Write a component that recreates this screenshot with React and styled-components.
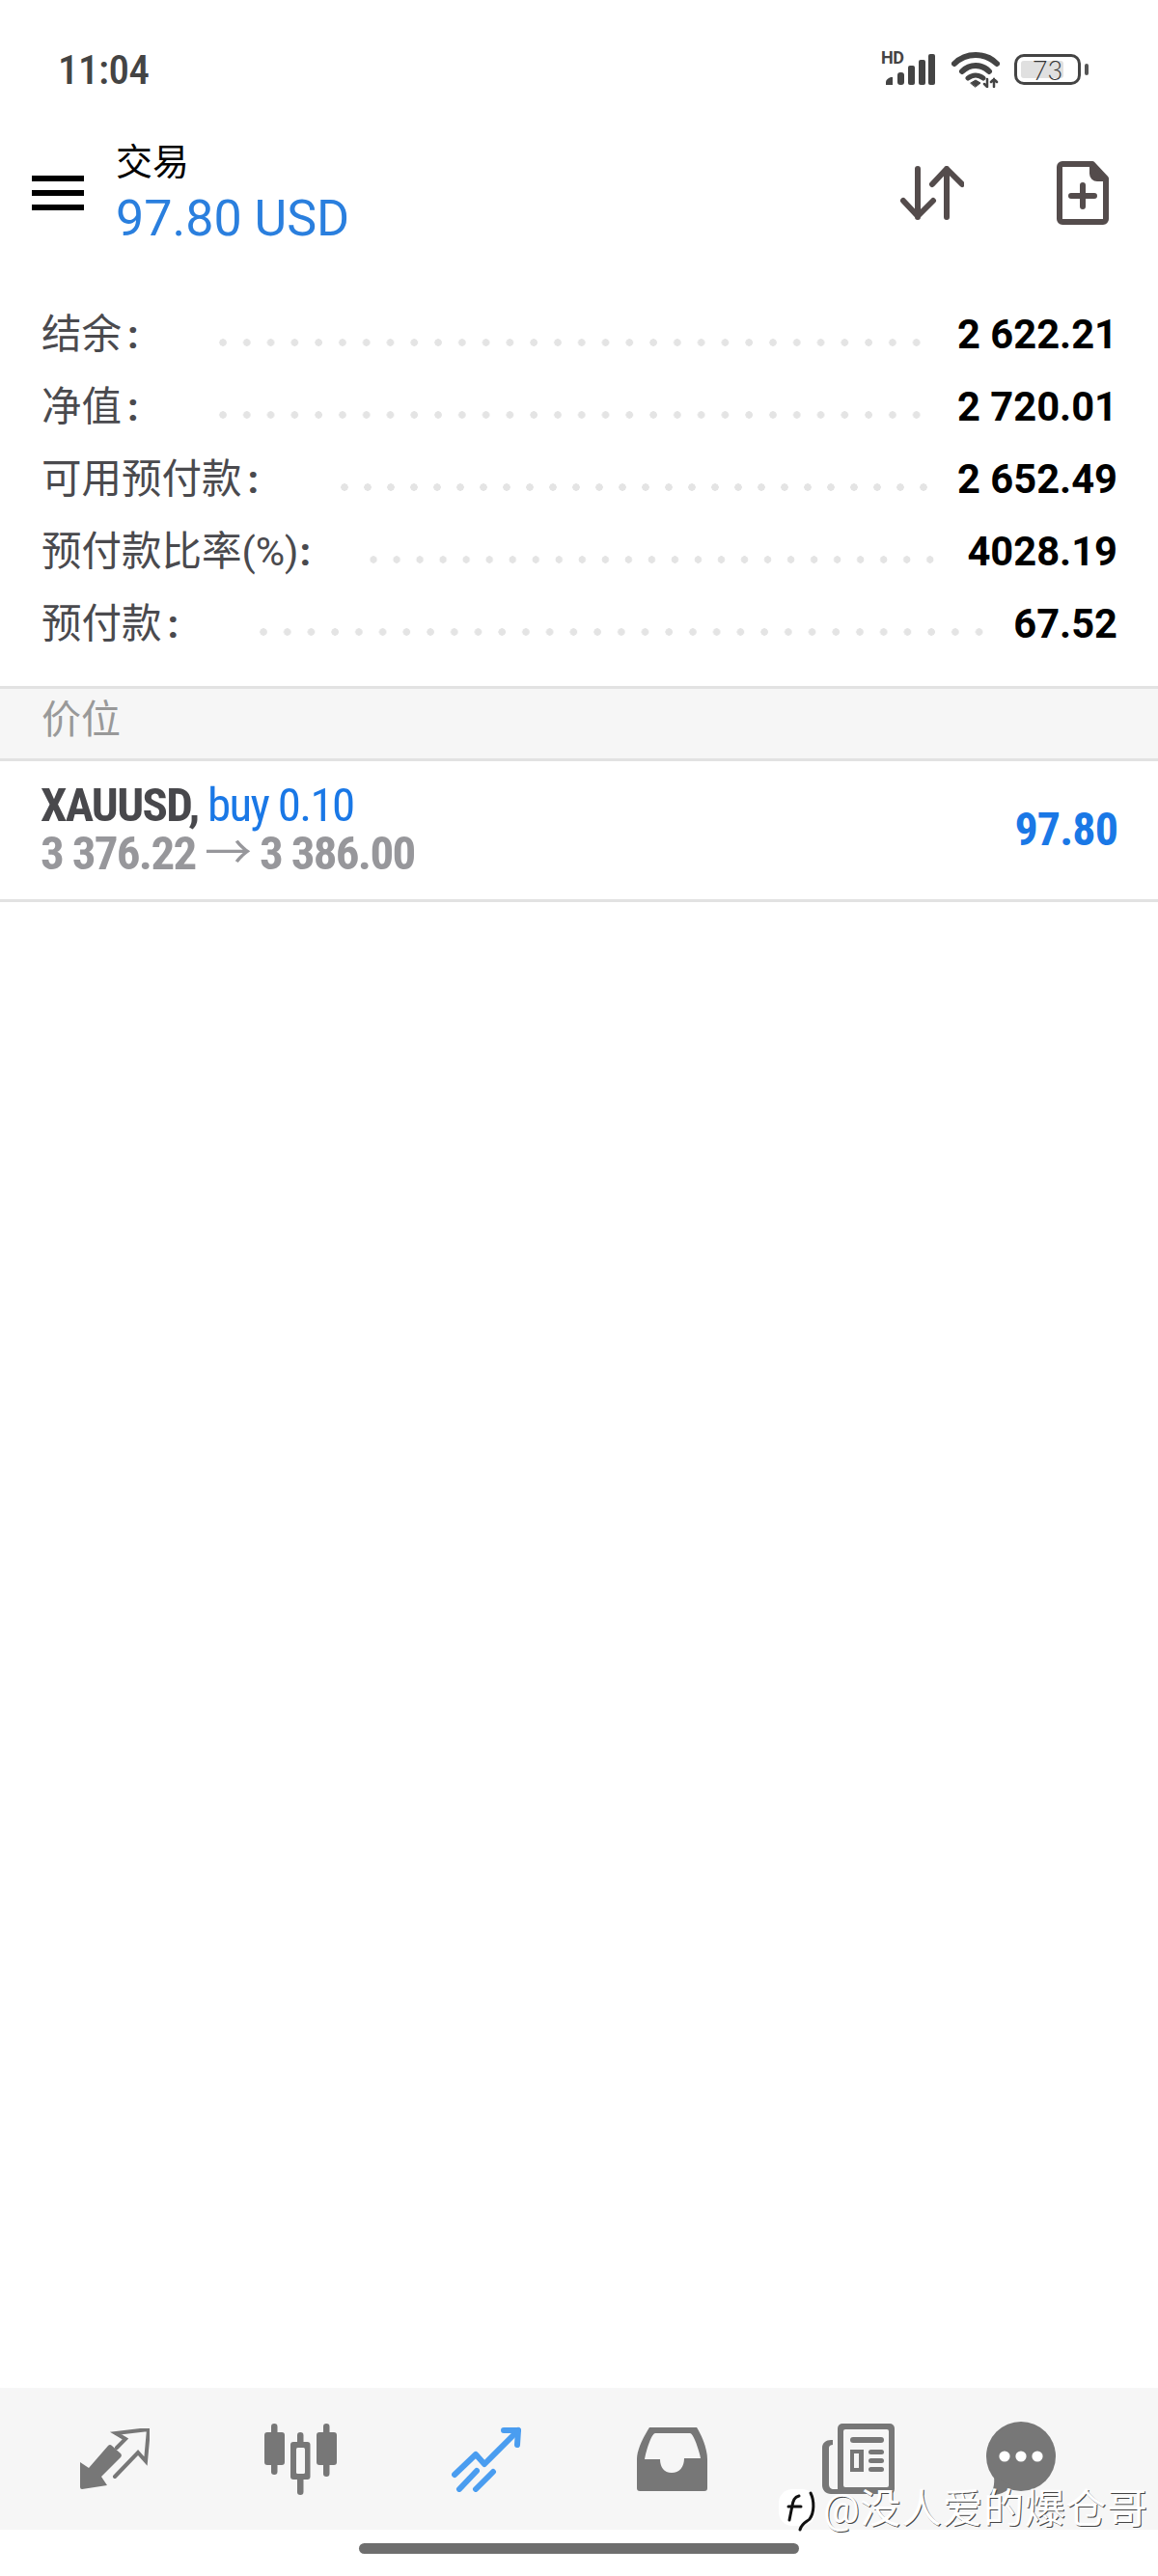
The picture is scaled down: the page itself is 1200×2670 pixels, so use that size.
import React from 'react';
import styled, { createGlobalStyle } from 'styled-components';

const GlobalStyle = createGlobalStyle`
  html, body {
    margin: 0;
    padding: 0;
    background: #fff;
  }
  * {
    box-sizing: border-box;
  }
`;

const Page = styled.div`
  position: relative;
  display: flex;
  flex-direction: column;
  width: 1200px;
  height: 2670px;
  overflow: hidden;
  background: #fff;
  font-family: Roboto, "Noto Sans CJK SC", sans-serif;
`;

const StatusBar = styled.div`
  display: flex;
  align-items: center;
  justify-content: space-between;
  height: 140px;
  padding: 4px 80px 0 60px;
`;

const Clock = styled.span`
  font-size: 43px;
  font-weight: 500;
  font-stretch: 80%;
  letter-spacing: -0.5px;
  color: #444;
`;

const StatusIcons = styled.div`
  display: flex;
  align-items: center;
  gap: 15px;
`;

const Signal = styled.div`
  position: relative;
  width: 56px;
  height: 36px;
`;

const HdBadge = styled.span`
  position: absolute;
  top: -3px;
  left: -2px;
  font-size: 18px;
  line-height: 18px;
  font-weight: 700;
  letter-spacing: -0.5px;
  color: #444;
`;

const Battery = styled.div`
  position: relative;
  display: flex;
  align-items: center;
  justify-content: center;
  width: 69px;
  height: 32px;
  border: 3px solid #444;
  border-radius: 10px;
  font-family: Lato, sans-serif;
  font-size: 27px;
  font-weight: 300;
  color: #333;
  &::before {
    content: '';
    position: absolute;
    left: 4px;
    top: 4px;
    bottom: 4px;
    width: 44px;
    border-radius: 3px;
    background: #e0e0e0;
  }
  &::after {
    content: '';
    position: absolute;
    right: -11px;
    top: 7px;
    width: 4px;
    height: 12px;
    border-radius: 2px;
    background: #555;
  }
`;

const BatteryLevel = styled.span`
  position: relative;
  line-height: 1;
`;

const Header = styled.header`
  display: flex;
  align-items: center;
  height: 120px;
  padding: 0 51px 0 33px;
`;

const Menu = styled.div`
  display: flex;
  flex-direction: column;
  gap: 9px;
  width: 54px;
  margin-right: 33px;
`;

const MenuBar = styled.span`
  height: 6px;
  background: #000;
`;

const TitleBlock = styled.div`
  display: flex;
  flex-direction: column;
  flex: 1;
`;

const Title = styled.div`
  margin-top: -2px;
  font-size: 38px;
  line-height: 50px;
  color: #000;
`;

const Profit = styled.div`
  margin-top: 1px;
  margin-bottom: -5px;
  font-size: 52px;
  line-height: 66px;
  color: #2a7fde;
`;

const HeaderActions = styled.div`
  display: flex;
  align-items: center;
  gap: 96px;
`;

const Summary = styled.section`
  padding: 48px 42px 28px 43px;
`;

const SummaryRow = styled.div`
  display: flex;
  align-items: center;
  height: 75px;
`;

const Label = styled.span`
  padding-bottom: 6px;
  font-size: 41.5px;
  color: #4a4a4e;
  white-space: nowrap;
`;

const Colon = styled.span`
  margin-left: ${({ $tight }) => ($tight ? 1 : 6)}px;
  font-weight: 700;
`;

const Leader = styled.span`
  flex: 1;
  height: 8px;
  margin: 18px ${({ $end }) => $end}px 0 ${({ $gap }) => $gap}px;
  background-image: radial-gradient(circle at 12px 4px, #e4e4e4 3.5px, transparent 4px);
  background-size: 24px 8px;
  background-repeat: space no-repeat;
`;

const Value = styled.span`
  margin-top: 2px;
  font-size: 41.7px;
  font-weight: 700;
  color: #000;
  white-space: nowrap;
`;

const SectionTitle = styled.div`
  display: flex;
  align-items: center;
  height: 78px;
  padding: 0 0 17px 43px;
  border-top: 3px solid #e2e2e2;
  border-bottom: 3px solid #e2e2e2;
  background: #f6f6f6;
  font-size: 41px;
  color: #999;
`;

const PositionRow = styled.div`
  display: flex;
  align-items: center;
  justify-content: space-between;
  height: 146px;
  padding: 0 42px 2px 42px;
  border-bottom: 3px solid #e2e2e2;
  font-stretch: 75%;
`;

const PositionInfo = styled.div`
  display: flex;
  flex-direction: column;
`;

const PositionLine = styled.div`
  font-size: 49px;
  line-height: 50px;
  letter-spacing: -1.7px;
  white-space: nowrap;
`;

const Symbol = styled.span`
  font-weight: 700;
  color: #48484c;
`;

const Side = styled.span`
  color: #1a78e6;
`;

const Prices = styled.span`
  font-weight: 700;
  color: #97979b;
`;

const PriceArrow = styled.span`
  font-weight: 400;
`;

const PositionProfit = styled.span`
  font-size: 48px;
  font-weight: 700;
  letter-spacing: -0.9px;
  color: #1a78e6;
`;

const Spacer = styled.div`
  flex: 1;
`;

const NavBar = styled.nav`
  display: grid;
  grid-template-columns: repeat(5, 192.5px) 144px;
  align-items: center;
  height: 147px;
  padding-left: 23px;
  background: #f6f6f6;
`;

const NavItem = styled.div`
  display: flex;
  justify-content: center;
`;

const HomeArea = styled.div`
  display: flex;
  align-items: center;
  justify-content: center;
  height: 48px;
`;

const HomeIndicator = styled.div`
  width: 456px;
  height: 11px;
  margin-top: -9px;
  border-radius: 6px;
  background: #6e6e6e;
`;

const Watermark = styled.div`
  position: absolute;
  left: 807px;
  top: 2578px;
  display: flex;
  align-items: center;
  gap: 6px;
  font-size: 42px;
  line-height: 46px;
  letter-spacing: 0.6px;
  color: #fff;
  text-shadow: 1px 1px 0 #444;
  white-space: nowrap;
`;

const SortIcon = () => (
  <svg width="66" height="56" viewBox="0 0 66 56" fill="none" stroke="#544c4c" strokeWidth="6" strokeLinecap="round" strokeLinejoin="round">
    <path d="M18 3v50M3 36l15 16 16-16" />
    <path d="M48 3v50M33 19L48 3l16 16" />
  </svg>
);

const NewOrderIcon = () => (
  <svg width="54" height="66" viewBox="0 0 54 66" fill="none" stroke="#544c4c" strokeLinejoin="round">
    <path d="M6 3h31l14 15v42a3 3 0 0 1-3 3H6a3 3 0 0 1-3-3V6a3 3 0 0 1 3-3z" strokeWidth="6" />
    <path d="M35 3v10a7 7 0 0 0 7 7h9z" fill="#544c4c" strokeWidth="2" />
    <path d="M27 25v22M15 36h24" strokeWidth="6" strokeLinecap="round" />
  </svg>
);

const SignalBars = () => (
  <svg width="56" height="36" viewBox="0 0 56 36" fill="#444">
    <path d="M3 34v-3c0-2 2-4 5-5h2v8z" />
    <rect x="15" y="21" width="7" height="13" rx="3" />
    <rect x="26" y="14" width="7" height="20" rx="2" />
    <rect x="37" y="8" width="7" height="26" rx="2" />
    <rect x="47" y="2" width="7" height="32" rx="2" />
  </svg>
);

const WifiIcon = () => (
  <svg width="50" height="38" viewBox="0 0 50 38" fill="none" stroke="#444" strokeLinecap="round">
    <path d="M3 13C15 1 35 1 47 13" strokeWidth="6" />
    <path d="M11 21c8-8 20-8 28 0" strokeWidth="6" />
    <path d="M17 28c5-4 11-4 16 0" strokeWidth="5" />
    <path d="M20 33l5-3 5 3-5 4z" fill="#444" strokeWidth="1" />
    <path d="M37 29v8M34 34l3 3M44 37v-8M41 32l3-3 3 3" strokeWidth="2.5" />
  </svg>
);

const TradeNavIcon = () => (
  <svg width="72" height="64" viewBox="0 0 72 64" fill="#777">
    <path d="M0 35l9 6L29 18a3 3 0 0 1 4 0l9 8a3 3 0 0 1 0 4L22 50l6 9-26 4a2 2 0 0 1-2-2z" />
    <path d="M38 20l9-9-10-6 34-4-3 33-8-9-24 25" fill="none" stroke="#777" strokeWidth="4" strokeLinecap="round" />
  </svg>
);

const ChartNavIcon = () => (
  <svg width="75" height="75" viewBox="0 0 75 75" fill="#777">
    <rect x="7" y="1" width="6.5" height="53" rx="3.2" />
    <rect y="10" width="21" height="34" rx="3" />
    <rect x="34" y="10" width="6.5" height="65" rx="3.2" />
    <rect x="27" y="20" width="20.5" height="39" rx="3" />
    <rect x="33" y="26" width="9" height="27" rx="1.5" fill="#f6f6f6" />
    <rect x="61" y="1" width="6.5" height="55" rx="3.2" />
    <rect x="54" y="10" width="21" height="34" rx="3" />
  </svg>
);

const TradeActiveIcon = () => (
  <svg width="72" height="68" viewBox="0 0 72 68" fill="none" stroke="#4a9df0" strokeWidth="6" strokeLinecap="round" strokeLinejoin="round">
    <path d="M3 50l22-21 9 10 35-35" />
    <path d="M54 4h15l-1 15" />
    <path d="M26 46L8 65M43 47L25 65" />
  </svg>
);

const InboxIcon = () => (
  <svg width="73" height="66" viewBox="0 0 73 66">
    <path d="M13 0h49c5 8 11 22 11 33v30a3 3 0 0 1-3 3H3a3 3 0 0 1-3-3V33C0 22 8 8 13 0z" fill="#777" />
    <path d="M19 6h36c4 0 10 20 11 26H49c0 9-5 15-13 15s-12-6-12-14H8C9 26 15 6 19 6z" fill="#f6f6f6" />
  </svg>
);

const NewsIcon = () => (
  <svg width="75" height="73" viewBox="0 0 75 73" fill="#777">
    <rect x="16" y="0" width="59" height="73" rx="5" />
    <rect x="22" y="6" width="47" height="60" rx="2" fill="#f6f6f6" />
    <path d="M11 17H9c-5 0-9 3-9 8v39c0 5 4 9 9 9h20v-5H12c-3 0-5-2-5-5V25c0-2 2-3 4-3z" />
    <rect x="29" y="14" width="35" height="6" rx="3" />
    <path fillRule="evenodd" d="M29 27h14v23H29zM33 31v15h5V31z" />
    <rect x="48" y="27" width="16" height="5" rx="2.5" />
    <rect x="48" y="36" width="16" height="5" rx="2.5" />
    <rect x="48" y="45" width="16" height="5" rx="2.5" />
  </svg>
);

const ChatIcon = () => (
  <svg width="72" height="78" viewBox="0 0 72 78" fill="#777">
    <circle cx="36" cy="36" r="36" />
    <path d="M8 56C9 66 7 72 3 77c10-1 18-4 24-10z" />
    <circle cx="19" cy="36" r="5.6" fill="#fff" />
    <circle cx="36" cy="36" r="5.6" fill="#fff" />
    <circle cx="53" cy="36" r="5.6" fill="#fff" />
  </svg>
);

const WatermarkLogo = () => (
  <svg width="40" height="46" viewBox="0 0 40 46" fill="none" strokeLinecap="round">
    <rect x="0" y="2" width="38" height="38" rx="14" fill="#fff" />
    <path d="M21 9c-5 1-6 5-7 10l-3 15" stroke="#111" strokeWidth="3" />
    <path d="M10 20h13" stroke="#111" strokeWidth="3" />
    <path d="M33 6c4 8 4 20-1 27-3 3-8 4-10 11" stroke="#111" strokeWidth="3" />
  </svg>
);

const rows = [
  { label: '结余', value: '2 622.21', gap: 75, end: 30 },
  { label: '净值', value: '2 720.01', gap: 75, end: 30 },
  { label: '可用预付款', value: '2 652.49', gap: 77, end: 23 },
  { label: '预付款比率(%)', value: '4028.19', gap: 53, end: 26, tight: true },
  { label: '预付款', value: '67.52', gap: 76, end: 23 },
];

const navIcons = [TradeNavIcon, ChartNavIcon, TradeActiveIcon, InboxIcon, NewsIcon, ChatIcon];

export default function App() {
  return (
    <Page>
      <GlobalStyle />
      <StatusBar>
        <Clock>11:04</Clock>
        <StatusIcons>
          <Signal>
            <HdBadge>HD</HdBadge>
            <SignalBars />
          </Signal>
          <WifiIcon />
          <Battery>
            <BatteryLevel>73</BatteryLevel>
          </Battery>
        </StatusIcons>
      </StatusBar>

      <Header>
        <Menu>
          <MenuBar />
          <MenuBar />
          <MenuBar />
        </Menu>
        <TitleBlock>
          <Title>交易</Title>
          <Profit>97.80 USD</Profit>
        </TitleBlock>
        <HeaderActions>
          <SortIcon />
          <NewOrderIcon />
        </HeaderActions>
      </Header>

      <Summary>
        {rows.map((row) => (
          <SummaryRow key={row.label}>
            <Label>
              {row.label}
              <Colon $tight={row.tight}>:</Colon>
            </Label>
            <Leader $gap={row.gap} $end={row.end} />
            <Value>{row.value}</Value>
          </SummaryRow>
        ))}
      </Summary>

      <SectionTitle>价位</SectionTitle>
      <PositionRow>
        <PositionInfo>
          <PositionLine>
            <Symbol>XAUUSD,</Symbol> <Side>buy 0.10</Side>
          </PositionLine>
          <PositionLine>
            <Prices>
              3 376.22 <PriceArrow>→</PriceArrow> 3 386.00
            </Prices>
          </PositionLine>
        </PositionInfo>
        <PositionProfit>97.80</PositionProfit>
      </PositionRow>

      <Spacer />

      <NavBar>
        {navIcons.map((Icon, i) => (
          <NavItem key={i}>
            <Icon />
          </NavItem>
        ))}
      </NavBar>
      <HomeArea>
        <HomeIndicator />
      </HomeArea>

      <Watermark>
        <WatermarkLogo />
        <span>@没人爱的爆仓哥</span>
      </Watermark>
    </Page>
  );
}
